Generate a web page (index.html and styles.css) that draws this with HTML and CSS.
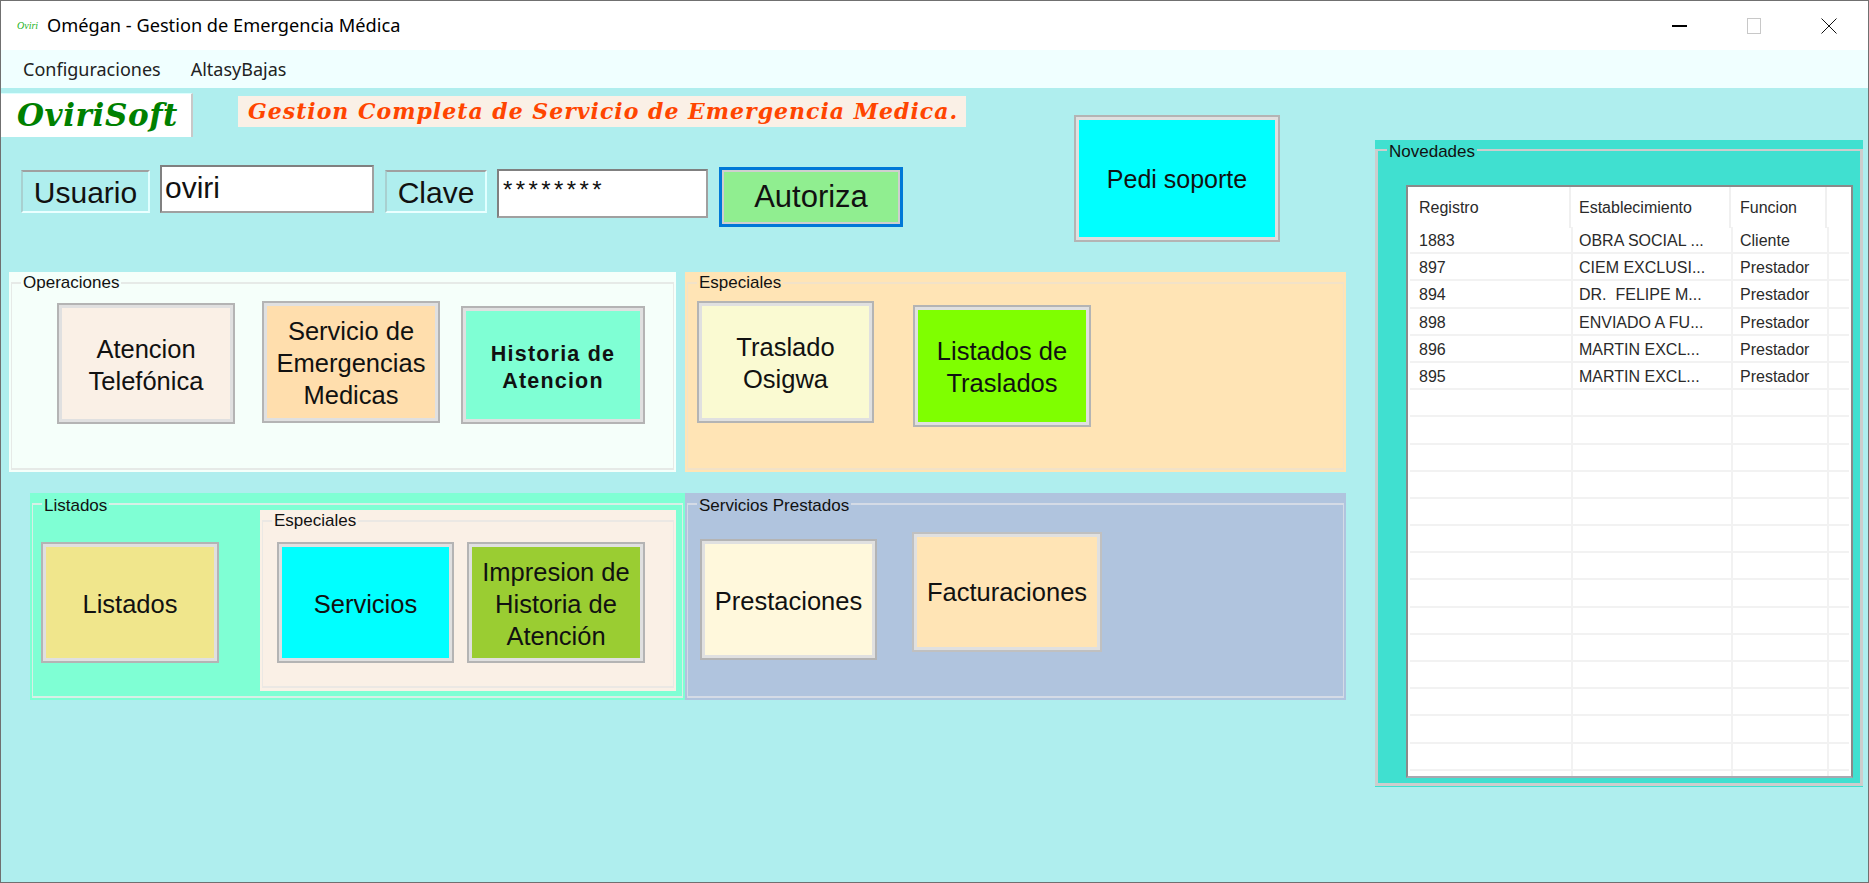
FILE: index.html
```html
<!DOCTYPE html>
<html lang="es">
<head>
  <meta charset="UTF-8" />
  <title>Omégan - Gestion de Emergencia Médica</title>
  <link rel="stylesheet" href="styles.css">
</head>
<body>
<div class="window">

  <div class="titlebar">
    <span class="app-icon">Oviri</span>
    <span class="app-title">Omégan - Gestion de Emergencia Médica</span>
    <div class="controls">
      <svg class="ctl-min" width="15" height="2" viewBox="0 0 15 2"><rect width="15" height="2" fill="#000"/></svg>
      <svg class="ctl-max" width="14" height="16" viewBox="0 0 14 16"><rect x="0.5" y="0.5" width="13" height="15" fill="none" stroke="#c8c8c8"/></svg>
      <svg class="ctl-close" width="16" height="16" viewBox="0 0 16 16"><path d="M0.5 0.5L15.5 15.5M15.5 0.5L0.5 15.5" stroke="#111" fill="none"/></svg>
    </div>
  </div>

  <div class="menubar">
    <span class="menu-item">Configuraciones</span>
    <span class="menu-item">AltasyBajas</span>
  </div>

  <div class="client">
    <div class="main">

      <div class="top">
        <div class="top-left">
          <div class="brand-row">
            <div class="logo">OviriSoft</div>
            <div class="banner">Gestion Completa de Servicio de Emergencia Medica.</div>
          </div>
          <form class="login-row">
            <label class="login-label lbl-user">Usuario</label>
            <input class="txt-user" type="text" value="oviri" />
            <label class="login-label lbl-pass">Clave</label>
            <input class="txt-pass" type="text" value="********" />
            <button class="btn-auth" type="button">Autoriza</button>
          </form>
        </div>
        <button class="btn btn-soporte" type="button">Pedi soporte</button>
      </div>

      <div class="group-row row-one">
        <section class="group grp-operaciones">
          <span class="group-title">Operaciones</span>
          <div class="group-frame">
            <button class="btn btn-atencion" type="button">Atencion<br>Telefónica</button>
            <button class="btn btn-servicio" type="button">Servicio de<br>Emergencias<br>Medicas</button>
            <button class="btn btn-historia" type="button">Historia de<br>Atencion</button>
          </div>
        </section>
        <section class="group grp-especiales">
          <span class="group-title">Especiales</span>
          <div class="group-frame">
            <button class="btn btn-traslado" type="button">Traslado<br>Osigwa</button>
            <button class="btn btn-listraslados" type="button">Listados de<br>Traslados</button>
          </div>
        </section>
      </div>

      <div class="group-row row-two">
        <section class="group grp-listados">
          <span class="group-title">Listados</span>
          <div class="group-frame">
            <button class="btn btn-listados" type="button">Listados</button>
            <section class="group grp-inner">
              <span class="group-title">Especiales</span>
              <div class="group-frame">
                <button class="btn btn-servicios" type="button">Servicios</button>
                <button class="btn btn-impresion" type="button">Impresion de<br>Historia de<br>Atención</button>
              </div>
            </section>
          </div>
        </section>
        <section class="group grp-prestados">
          <span class="group-title">Servicios Prestados</span>
          <div class="group-frame">
            <button class="btn btn-prestaciones" type="button">Prestaciones</button>
            <button class="btn btn-facturaciones" type="button">Facturaciones</button>
          </div>
        </section>
      </div>

    </div>

    <section class="group grp-novedades">
      <span class="group-title">Novedades</span>
      <div class="group-frame">
        <div class="list">
          <div class="list-head">
            <span>Registro</span>
            <span>Establecimiento</span>
            <span>Funcion</span>
            <span></span>
          </div>
          <div class="list-rows">
            <div class="row"><span>1883</span><span>OBRA SOCIAL ...</span><span>Cliente</span></div>
            <div class="row"><span>897</span><span>CIEM EXCLUSI...</span><span>Prestador</span></div>
            <div class="row"><span>894</span><span>DR.&nbsp; FELIPE M...</span><span>Prestador</span></div>
            <div class="row"><span>898</span><span>ENVIADO A FU...</span><span>Prestador</span></div>
            <div class="row"><span>896</span><span>MARTIN EXCL...</span><span>Prestador</span></div>
            <div class="row"><span>895</span><span>MARTIN EXCL...</span><span>Prestador</span></div>
            <div class="row"></div>
            <div class="row"></div>
            <div class="row"></div>
            <div class="row"></div>
            <div class="row"></div>
            <div class="row"></div>
            <div class="row"></div>
            <div class="row"></div>
            <div class="row"></div>
            <div class="row"></div>
            <div class="row"></div>
            <div class="row"></div>
            <div class="row"></div>
            <div class="row"></div>
          </div>
        </div>
      </div>
    </section>
  </div>

</div>
</body>
</html>
```

FILE: styles.css
```css
* {
  box-sizing: border-box;
}
html, body {
  margin: 0;
  height: 100%;
  overflow: hidden;
}
body {
  font-family: "Liberation Sans", Arial, sans-serif;
  color: #111;
}
.window {
  width: 1869px;
  height: 883px;
  display: flex;
  flex-direction: column;
  border: 1px solid #707070;
  background-color: #afeeee;
}

/* title bar */
.titlebar {
  height: 49px;
  flex: none;
  display: flex;
  align-items: center;
  background-color: #fff;
  padding-left: 16px;
}
.app-icon {
  width: 30px;
  font-family: "Liberation Serif", serif;
  font-style: italic;
  font-size: 10px;
  color: #1db31d;
}
.app-title {
  font-family: "Noto Sans", sans-serif;
  font-size: 18.2px;
  padding-bottom: 2px;
  color: #000;
}
.controls {
  margin-left: auto;
  display: flex;
  align-items: center;
  padding-right: 31px;
}
.ctl-min {
  margin-right: 60px;
}
.ctl-max {
  margin-right: 60px;
}

/* menu */
.menubar {
  height: 38px;
  flex: none;
  display: flex;
  align-items: center;
  background-color: #f0ffff;
  padding-left: 22px;
  gap: 30px;
}
.menu-item {
  font-family: "Noto Sans", sans-serif;
  font-size: 18px;
  color: #222;
}

.client {
  flex: 1;
  display: flex;
  min-height: 0;
}
.main {
  width: 1374px;
  flex: none;
}

/* top area with logo and login */
.top {
  height: 184px;
  display: flex;
  align-items: flex-start;
}
.top-left {
  width: 1073px;
  flex: none;
}
.brand-row {
  display: flex;
  align-items: flex-start;
  margin-top: 5px;
  height: 44px;
}
.logo {
  width: 192px;
  height: 44px;
  background-color: #fff;
  border-right: 2px solid #c8c8c8;
  border-top: 1px solid #dff;
  padding-left: 16px;
  font-family: "DejaVu Serif", serif;
  font-weight: bold;
  font-style: italic;
  font-size: 31px;
  line-height: 42px;
  letter-spacing: 0.6px;
  white-space: nowrap;
  color: #008000;
}
.banner {
  width: 728px;
  height: 31px;
  margin: 3px 0 0 45px;
  padding-left: 10px;
  background-color: #faf0e6;
  font-family: "DejaVu Serif", serif;
  font-weight: bold;
  font-style: italic;
  font-size: 22px;
  line-height: 31px;
  letter-spacing: 1px;
  white-space: nowrap;
  color: #ff4500;
}
.login-row {
  display: flex;
  align-items: flex-start;
  padding-left: 20px;
  margin: 0;
}
.login-label {
  height: 43px;
  margin-top: 33px;
  border: 2px solid;
  border-color: #a0a0a0 #e0ffff #eaffff #a8d0d0;
  font-size: 30px;
  line-height: 41px;
  text-align: center;
}
.lbl-user {
  width: 129px;
}
.lbl-pass {
  width: 102px;
  margin-left: 11px;
}
.login-row input {
  background-color: #fff;
  border: 2px solid #808080;
  border-bottom-color: #a0a0a0;
  border-right-color: #a0a0a0;
  font-family: "Liberation Sans", Arial, sans-serif;
  color: #111;
  outline: none;
}
.txt-user {
  width: 214px;
  height: 48px;
  margin: 28px 0 0 10px;
  padding: 0 0 2px 3px;
  font-size: 30px;
}
.txt-pass {
  width: 211px;
  height: 49px;
  margin: 32px 0 0 10px;
  padding: 0 0 7px 4px;
  font-size: 24px;
  letter-spacing: 3.4px;
}
.btn-auth {
  width: 184px;
  height: 60px;
  margin: 30px 0 0 11px;
  border: 3px solid #0078d7;
  box-shadow: inset 0 0 0 2px #cfcfcf;
  background-color: #90ee90;
  font-family: "Liberation Sans", Arial, sans-serif;
  font-size: 31px;
  color: #111;
}

/* big buttons */
.btn {
  flex: none;
  width: 178px;
  height: 121px;
  padding: 2px 0 0;
  border: 2px solid #b4b4b4;
  box-shadow: inset 0 0 0 3px #e0e0e0;
  font-family: "Liberation Sans", Arial, sans-serif;
  font-size: 25.5px;
  line-height: 32px;
  color: #111;
}
.btn-soporte {
  width: 206px;
  height: 127px;
  margin-top: 27px;
  padding-top: 0;
  background-color: #00ffff;
  font-size: 25px;
}
.btn-atencion {
  margin: 19px 0 0 44px;
  background-color: #faf0e6;
}
.btn-servicio {
  height: 122px;
  margin: 17px 0 0 27px;
  background-color: #ffdead;
}
.btn-historia {
  width: 184px;
  height: 118px;
  margin: 22px 0 0 21px;
  padding-top: 6px;
  background-color: #7fffd4;
  font-weight: bold;
  font-size: 21.5px;
  letter-spacing: 1.2px;
  line-height: 27px;
}
.btn-traslado {
  width: 177px;
  height: 122px;
  margin: 17px 0 0 8px;
  background-color: #fafad2;
}
.btn-listraslados {
  height: 122px;
  margin: 21px 0 0 39px;
  background-color: #7fff00;
}
.btn-listados {
  margin: 37px 0 0 7px;
  background-color: #f0e68c;
}
.btn-servicios {
  width: 177px;
  margin: 20px 0 0 13px;
  background-color: #00ffff;
}
.btn-impresion {
  margin: 20px 0 0 13px;
  background-color: #9acd32;
}
.btn-prestaciones {
  width: 177px;
  margin: 34px 0 0 11px;
  background-color: #fff8dc;
}
.btn-facturaciones {
  width: 190px;
  height: 120px;
  margin: 27px 0 0 35px;
  padding-top: 0;
  background-color: #ffe4b5;
  border-color: #c0c0c0;
}

/* group boxes */
.group-row {
  display: flex;
  align-items: flex-start;
}
.row-one {
  padding-left: 8px;
  gap: 9px;
}
.row-two {
  padding-left: 29px;
  margin-top: 21px;
}
.group {
  position: relative;
  display: flex;
  flex: none;
}
.group-frame {
  flex: 1;
  display: flex;
  align-items: flex-start;
  margin: 10px 2px 2px;
  padding-left: 1px;
  border: solid #e6eae7;
  border-width: 2px 1px;
}
.group-title {
  position: absolute;
  top: 1px;
  left: 12px;
  padding: 0 2px;
  background-color: inherit;
  font-size: 17px;
  line-height: 20px;
  color: #111;
}
.row-two > .group > .group-title {
  top: 3px;
}
.grp-operaciones {
  width: 667px;
  height: 200px;
  background-color: #f5fffa;
}
.grp-especiales {
  width: 661px;
  height: 200px;
  background-color: #ffe4b5;
}
.grp-especiales .group-frame {
  border-color: #f2e2c8;
}
.grp-listados {
  width: 655px;
  height: 207px;
  background-color: #7fffd4;
}
.grp-listados > .group-frame {
  border-color: #d8efe6;
}
.grp-prestados {
  width: 661px;
  height: 207px;
  background-color: #b0c4de;
}
.grp-prestados .group-frame {
  border-color: #d4dbe6;
}
.grp-inner {
  width: 416px;
  height: 181px;
  margin: 5px 0 0 41px;
  background-color: #faf0e6;
}
.grp-inner .group-frame {
  border-color: #ebe8e4;
  margin-bottom: 3px;
}
.grp-novedades {
  width: 488px;
  height: 647px;
  margin-top: 52px;
  background-color: #40e0d0;
}
.grp-novedades .group-title {
  top: 2px;
}
.grp-novedades .group-frame {
  margin: 9px 0 1px;
  padding-left: 0;
  border: 3px solid #cdcdcd;
  border-top-width: 2px;
}

/* list view */
.list {
  width: 447px;
  height: 593px;
  margin: 34px 0 0 28px;
  background-color: #fff;
  border: 2px solid #8a8a8a;
  border-bottom-color: #a8a8b0;
  font-size: 16px;
  color: #2a2a2a;
}
.list-head {
  display: grid;
  grid-template-columns: 161px 160px 96px 1fr;
  height: 40px;
  margin-left: 2px;
  line-height: 41px;
}
.list-head span {
  border-right: 2px solid #f0f0f0;
  padding-left: 9px;
}
.list-head span:nth-child(2) {
  padding-left: 8px;
}
.list-head span:last-child {
  border-right: none;
}
.list-rows {
  height: 549px;
  background-image:
    linear-gradient(#f2f2f2, #f2f2f2),
    linear-gradient(#f2f2f2, #f2f2f2),
    linear-gradient(#f2f2f2, #f2f2f2);
  background-size: 2px 100%;
  background-repeat: no-repeat;
  background-position: 163px 0, 323px 0, 419px 0;
}
.row {
  display: grid;
  grid-template-columns: 163px 160px 96px 1fr;
  height: 27.2px;
  margin: 0 2px;
  border-bottom: 2px solid #f2f2f2;
  line-height: 27px;
}
.row span {
  white-space: nowrap;
  padding-left: 9px;
}
.row span:nth-child(2) {
  padding-left: 6px;
}
.row span:nth-child(3) {
  padding-left: 7px;
}
```
